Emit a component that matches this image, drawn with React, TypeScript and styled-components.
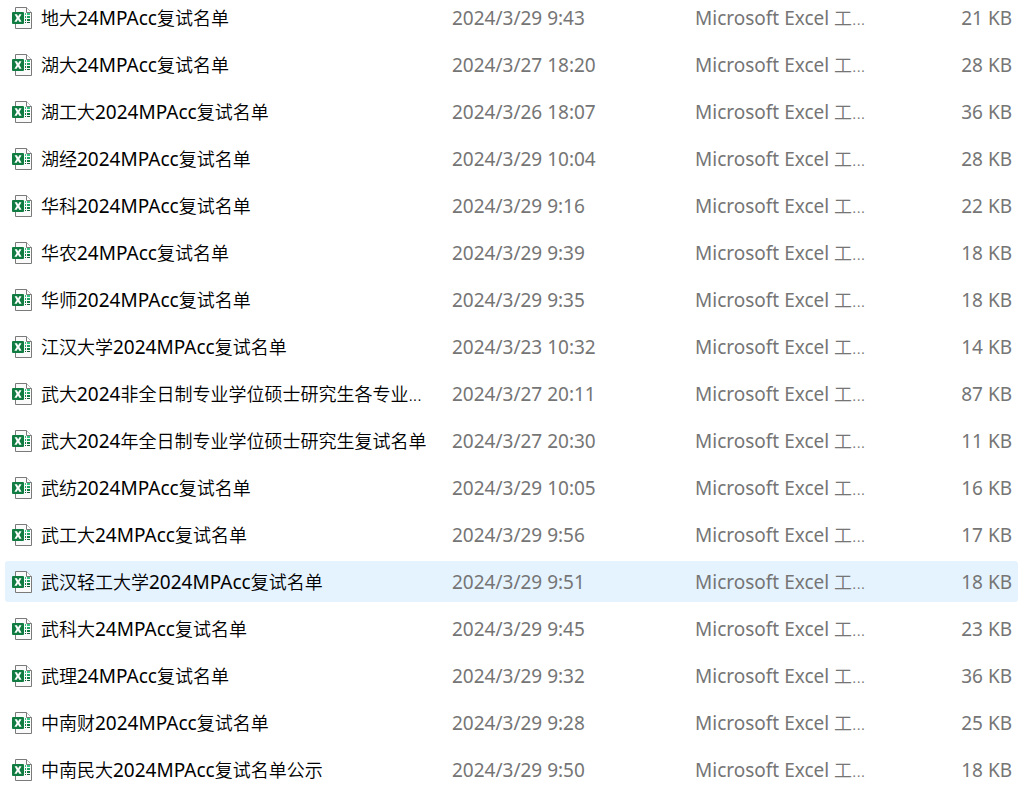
import React from "react";
import styled, { createGlobalStyle } from "styled-components";

interface FileEntry {
  name: string;
  modified: string;
  size: number;
}

const FILE_TYPE = "Microsoft Excel 工...";

const files: FileEntry[] = [
  { name: "地大24MPAcc复试名单", modified: "2024/3/29 9:43", size: 21 },
  { name: "湖大24MPAcc复试名单", modified: "2024/3/27 18:20", size: 28 },
  { name: "湖工大2024MPAcc复试名单", modified: "2024/3/26 18:07", size: 36 },
  { name: "湖经2024MPAcc复试名单", modified: "2024/3/29 10:04", size: 28 },
  { name: "华科2024MPAcc复试名单", modified: "2024/3/29 9:16", size: 22 },
  { name: "华农24MPAcc复试名单", modified: "2024/3/29 9:39", size: 18 },
  { name: "华师2024MPAcc复试名单", modified: "2024/3/29 9:35", size: 18 },
  { name: "江汉大学2024MPAcc复试名单", modified: "2024/3/23 10:32", size: 14 },
  { name: "武大2024非全日制专业学位硕士研究生各专业...", modified: "2024/3/27 20:11", size: 87 },
  { name: "武大2024年全日制专业学位硕士研究生复试名单", modified: "2024/3/27 20:30", size: 11 },
  { name: "武纺2024MPAcc复试名单", modified: "2024/3/29 10:05", size: 16 },
  { name: "武工大24MPAcc复试名单", modified: "2024/3/29 9:56", size: 17 },
  { name: "武汉轻工大学2024MPAcc复试名单", modified: "2024/3/29 9:51", size: 18 },
  { name: "武科大24MPAcc复试名单", modified: "2024/3/29 9:45", size: 23 },
  { name: "武理24MPAcc复试名单", modified: "2024/3/29 9:32", size: 36 },
  { name: "中南财2024MPAcc复试名单", modified: "2024/3/29 9:28", size: 25 },
  { name: "中南民大2024MPAcc复试名单公示", modified: "2024/3/29 9:50", size: 18 },
];

const ACTIVE_FILE = "武汉轻工大学2024MPAcc复试名单";

const GlobalStyle = createGlobalStyle`
  body {
    margin: 0;
    background: #ffffff;
    font-family: "Noto Sans", "Noto Sans CJK SC", sans-serif;
  }
`;

const Viewport = styled.main`
  padding: 0 18px 0 5px;
  overflow: hidden;
`;

/* The list is scrolled slightly, so the first row is cut by the top edge. */
const FileTable = styled.table`
  width: 100%;
  margin: -9px 0 -6px;
  table-layout: fixed;
  border-collapse: separate;
  border-spacing: 0 6px;
  font-size: 19px;
  line-height: 24px;
`;

const Column = styled.col<{ $width?: number }>`
  width: ${({ $width }) => ($width ? `${$width}px` : "auto")};
`;

const Row = styled.tr<{ $active: boolean }>`
  height: 41px;
  background: ${({ $active }) => ($active ? "#e5f3ff" : "transparent")};
`;

const Cell = styled.td<{ $align?: "left" | "right" }>`
  padding: 0 6px;
  overflow: hidden;
  color: #757575;
  text-align: ${({ $align = "left" }) => $align};
  text-overflow: ellipsis;
  vertical-align: middle;
  white-space: nowrap;

  &:last-child {
    border-radius: 0 3px 3px 0;
  }
`;

const NameCell = styled(Cell)`
  padding: 0 14px 0 7px;
  border-radius: 3px 0 0 3px;
  color: #000000;
`;

const NameLayout = styled.div`
  display: flex;
  align-items: center;
  gap: 9px;
`;

const FileName = styled.span`
  min-width: 0;
  overflow: hidden;
  text-overflow: ellipsis;
`;

const Han = styled.span`
  font-size: 18px;
  font-weight: 350;
`;

const Icon = styled.svg`
  display: block;
  flex: none;
  width: 20px;
  height: 22px;
`;

function ExcelIcon() {
  return (
    <Icon viewBox="0 0 20 22" aria-hidden="true">
      <path d="M3.5 0.5H14.5L19.5 5.5V21.5H3.5Z" fill="#fafafa" stroke="#7a7a7a" />
      <path d="M14.5 0.5V5.5H19.5" fill="#ffffff" stroke="#7a7a7a" />
      <path d="M13 6H14V8H13ZM15 6H18V8H15Z" fill="#33c481" />
      <path d="M13 9H14V11H13ZM15 9H18V11H15Z" fill="#21a366" />
      <path d="M13 12H14V14H13ZM15 12H18V14H15Z" fill="#107c41" />
      <path d="M13 15H14V16H13ZM15 15H18V16H15Z" fill="#185c37" />
      <rect y="5" width="12" height="12" rx="1" fill="#107c41" />
      <path d="M2.6 7.3H5L6.1 9.6L7.3 7.3H9.5L7.4 11L9.6 14.8H7.2L6 12.4L4.7 14.8H2.4L4.7 11Z" fill="#ffffff" />
    </Icon>
  );
}

/* Chinese runs are set one size below the Latin letters and digits. */
function MixedText({ text }: { text: string }) {
  return (
    <>
      {text
        .split(/([\u4e00-\u9fff.]+)/)
        .filter(Boolean)
        .map((run, index) =>
          /[\u4e00-\u9fff]/.test(run) ? (
            <Han key={index}>{run}</Han>
          ) : (
            <React.Fragment key={index}>{run}</React.Fragment>
          ),
        )}
    </>
  );
}

export default function App() {
  return (
    <Viewport lang="zh-CN">
      <GlobalStyle />
      <FileTable>
        <colgroup>
          <Column />
          <Column $width={243} />
          <Column $width={190} />
          <Column $width={139} />
        </colgroup>
        <tbody>
          {files.map((file) => (
            <Row key={file.name} $active={file.name === ACTIVE_FILE}>
              <NameCell>
                <NameLayout>
                  <ExcelIcon />
                  <FileName>
                    <MixedText text={file.name} />
                  </FileName>
                </NameLayout>
              </NameCell>
              <Cell>{file.modified}</Cell>
              <Cell>
                <MixedText text={FILE_TYPE} />
              </Cell>
              <Cell $align="right">{file.size} KB</Cell>
            </Row>
          ))}
        </tbody>
      </FileTable>
    </Viewport>
  );
}
